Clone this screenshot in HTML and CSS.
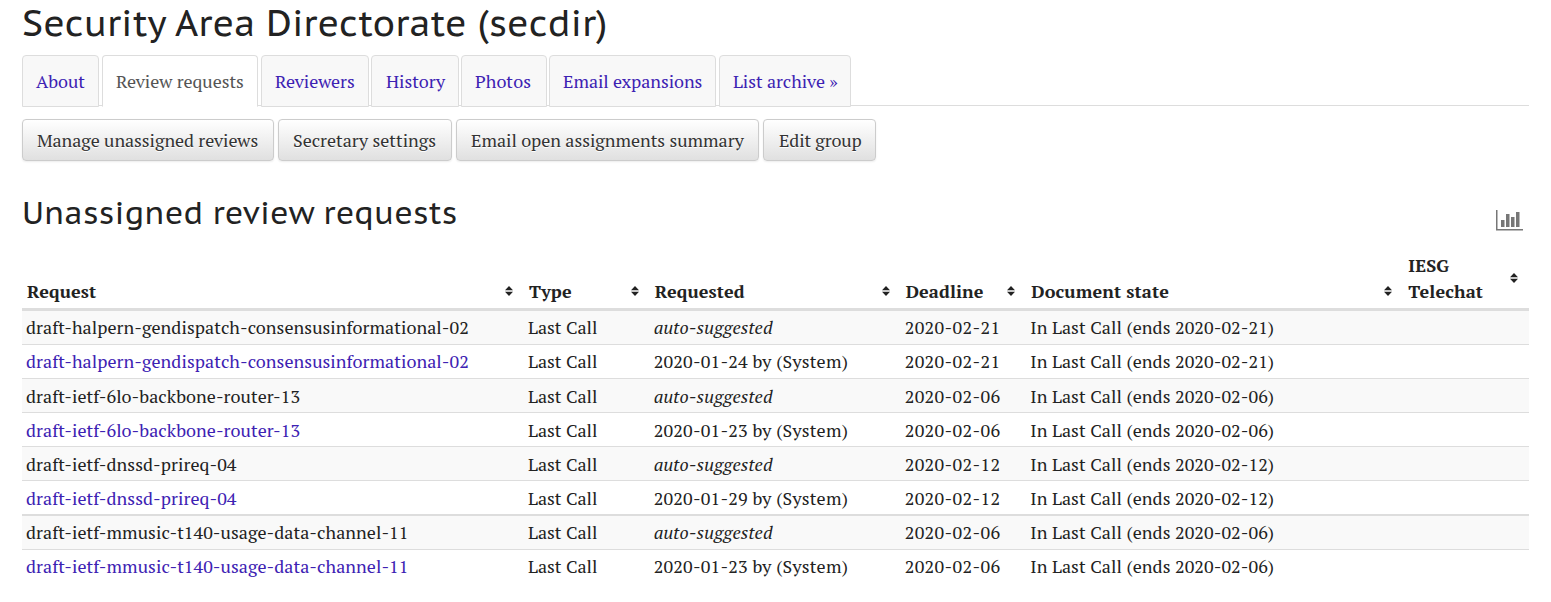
FILE: index.html
```
<!DOCTYPE html>
<html lang="en">
<head>
<meta charset="utf-8">
<title>Security Area Directorate (secdir)</title>
<link rel="stylesheet" href="styles.css">
</head>
<body>
<svg width="0" height="0" class="defs"><defs>
<symbol id="sort" viewBox="0 0 8 10"><path d="M4 0 8 4.3H0ZM0 5.7H8L4 10Z" fill="#222"/></symbol>
</defs></svg>
<main class="page">
  <h1 class="title">Security Area Directorate (secdir)</h1>
  <nav class="tabs">
    <a class="tab about" href="#">About</a>
    <a class="tab requests active" href="#">Review requests</a>
    <a class="tab reviewers" href="#">Reviewers</a>
    <a class="tab history" href="#">History</a>
    <a class="tab photos" href="#">Photos</a>
    <a class="tab expansions" href="#">Email expansions</a>
    <a class="tab archive" href="#">List archive »</a>
  </nav>
  <div class="buttons">
    <a class="btn manage" href="#">Manage unassigned reviews</a>
    <a class="btn settings" href="#">Secretary settings</a>
    <a class="btn summary" href="#">Email open assignments summary</a>
    <a class="btn edit" href="#">Edit group</a>
  </div>
  <div class="section">
    <h2 class="subtitle">Unassigned review requests</h2>
    <svg class="chart" width="27" height="21" viewBox="0 0 27 21" fill="#777"><path d="M0 0H1.5V19H27V20.6H0ZM5 10H8.5V17H5ZM10 4H13.5V17H10ZM15 7H18.5V17H15ZM20 2H23.5V17H20Z"/></svg>
  </div>
  <table class="grid">
    <colgroup><col class="c4"><col class="c1"><col class="c2"><col class="c1"><col class="c3"><col class="c1"></colgroup>
    <thead><tr>
      <th><div class="head"><span>Request</span><svg class="sort"><use href="#sort"/></svg></div></th>
      <th><div class="head"><span>Type</span><svg class="sort"><use href="#sort"/></svg></div></th>
      <th><div class="head"><span>Requested</span><svg class="sort"><use href="#sort"/></svg></div></th>
      <th><div class="head"><span>Deadline</span><svg class="sort"><use href="#sort"/></svg></div></th>
      <th><div class="head"><span>Document state</span><svg class="sort"><use href="#sort"/></svg></div></th>
      <th><div class="head"><span>IESG<br>Telechat</span><svg class="sort"><use href="#sort"/></svg></div></th>
    </tr></thead>
    <tbody>
      <tr class="first"><td class="doc">draft-halpern-gendispatch-consensusinformational-02</td><td>Last Call</td><td class="by"><em>auto-suggested</em></td><td class="date">2020-02-21</td><td class="state">In Last Call (ends 2020-02-21)</td><td></td></tr>
      <tr class="first"><td class="doc"><a href="#">draft-halpern-gendispatch-consensusinformational-02</a></td><td>Last Call</td><td class="by">2020-01-24 by (System)</td><td class="date">2020-02-21</td><td class="state">In Last Call (ends 2020-02-21)</td><td></td></tr>
      <tr><td class="doc">draft-ietf-6lo-backbone-router-13</td><td>Last Call</td><td class="by"><em>auto-suggested</em></td><td class="date">2020-02-06</td><td class="state">In Last Call (ends 2020-02-06)</td><td></td></tr>
      <tr><td class="doc"><a href="#">draft-ietf-6lo-backbone-router-13</a></td><td>Last Call</td><td class="by">2020-01-23 by (System)</td><td class="date">2020-02-06</td><td class="state">In Last Call (ends 2020-02-06)</td><td></td></tr>
      <tr><td class="doc">draft-ietf-dnssd-prireq-04</td><td>Last Call</td><td class="by"><em>auto-suggested</em></td><td class="date">2020-02-12</td><td class="state">In Last Call (ends 2020-02-12)</td><td></td></tr>
      <tr><td class="doc"><a href="#">draft-ietf-dnssd-prireq-04</a></td><td>Last Call</td><td class="by">2020-01-29 by (System)</td><td class="date">2020-02-12</td><td class="state">In Last Call (ends 2020-02-12)</td><td></td></tr>
      <tr class="group"><td class="doc">draft-ietf-mmusic-t140-usage-data-channel-11</td><td>Last Call</td><td class="by"><em>auto-suggested</em></td><td class="date">2020-02-06</td><td class="state">In Last Call (ends 2020-02-06)</td><td></td></tr>
      <tr class="last"><td class="doc"><a href="#">draft-ietf-mmusic-t140-usage-data-channel-11</a></td><td>Last Call</td><td class="by">2020-01-23 by (System)</td><td class="date">2020-02-06</td><td class="state">In Last Call (ends 2020-02-06)</td><td></td></tr>
    </tbody>
  </table>
</main>
</body>
</html>
```
FILE: styles.css
```
* { box-sizing: border-box; }
body { margin: 0; background: #fff; color: #222; font-family: "PT Serif", "Liberation Serif", serif; font-size: 18px; line-height: 26px; }
a { color: #3d22b3; text-decoration: none; }
.defs { position: absolute; }
.page { display: flow-root; padding: 0 22px; }
.title, .subtitle { margin: 0; font-family: "PT Sans Caption", "Noto Sans", sans-serif; font-weight: 400; white-space: nowrap; }
.title { font-size: 36px; line-height: 46px; height: 55px; letter-spacing: .22px; }

.tabs { display: flex; align-items: flex-start; height: 51px; border-bottom: 1px solid #ddd; white-space: nowrap; }
.tab { height: 52px; padding: 12px 0 0 13px; border: 1px solid #ddd; border-radius: 4px 4px 0 0; background: #f8f8f8; letter-spacing: -.04px; }
.tab.active { background: #fff; color: #555; border-bottom-color: #fff; }
.about { width: 77px; margin-right: 3px; }
.requests { width: 156px; margin-right: 3px; }
.reviewers { width: 108px; margin-right: 2px; }
.history { width: 88px; margin-right: 2px; padding-left: 14px; }
.photos { width: 86px; margin-right: 2px; letter-spacing: .1px; }
.expansions { width: 167px; margin-right: 3px; }
.archive { width: 132px; }

.buttons { display: flex; gap: 4px; padding-top: 13px; white-space: nowrap; }
.btn { height: 42px; padding: 7px 0 0 14px; border: 1px solid #ccc; border-radius: 4px; background: linear-gradient(#fff, #e0e0e0); box-shadow: 0 1px 2px rgba(0,0,0,.075); color: #333; text-shadow: 0 1px 0 #fff; letter-spacing: -.04px; }
.manage { width: 252px; }
.settings { width: 174px; letter-spacing: 0; }
.summary { width: 303px; letter-spacing: -.02px; }
.edit { width: 113px; padding-left: 15px; letter-spacing: -.12px; }

.section { display: flex; justify-content: space-between; height: 88px; padding: 30px 6px 0 0; }
.subtitle { font-size: 31px; line-height: 44px; letter-spacing: .33px; }
.chart { margin-top: 19px; }

.grid { width: 1507px; table-layout: fixed; border-collapse: separate; border-spacing: 0; white-space: nowrap; }
.c4 { width: 502px; } .c1 { width: 125.6px; } .c2 { width: 251px; } .c3 { width: 377px; }
th { height: 62px; padding: 0 11px 4px 5px; border-bottom: 3px solid #ddd; text-align: left; vertical-align: bottom; letter-spacing: .12px; }
.head { display: flex; justify-content: space-between; align-items: center; }
.sort { width: 8px; height: 10px; }
td { height: 34px; padding: 4px 4px 3px; border-bottom: 1px solid #ddd; }
tbody tr:nth-child(odd) td { background: #f9f9f9; }
.first td { padding: 3px 4px 4px; }
tbody .group td { height: 35px; border-top: 1px solid #ddd; padding: 3px 4px 4px; }
.last td { border-bottom: 0; padding: 3px 4px 5px; }

.doc { letter-spacing: .06px; }
.by { letter-spacing: .22px; }
.by em { letter-spacing: .13px; }
.date { letter-spacing: .36px; }
.state { letter-spacing: .08px; }
```
